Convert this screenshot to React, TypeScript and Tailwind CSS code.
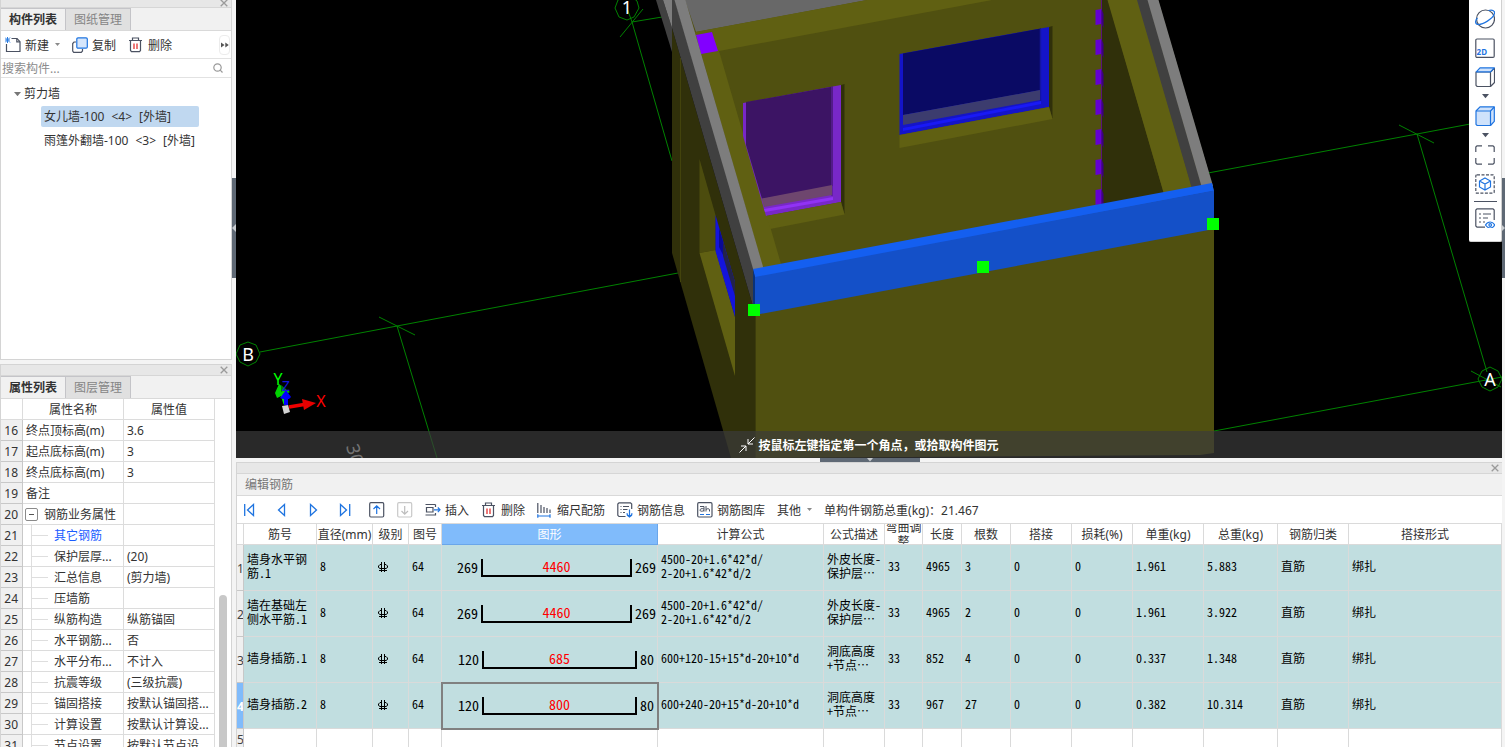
import type { ReactNode } from "react";

const UI_FONT = "font-['Noto_Sans','Noto_Sans_CJK_SC',sans-serif]";
const MONO_FONT = "font-['Noto_Sans_Mono_CJK_SC','Noto_Sans_CJK_SC',monospace]";

type IconProps = { className?: string };

function Glyph({ children, className = "size-4" }: { children: ReactNode; className?: string }) {
  return (
    <svg viewBox="0 0 16 16" fill="none" stroke="#4b5262" strokeWidth="1.2" className={`shrink-0 ${className}`} aria-hidden="true">
      {children}
    </svg>
  );
}

function Caret({ className = "w-[5px]" }: IconProps) {
  return (
    <svg viewBox="0 0 6 4" className={`shrink-0 ${className}`} aria-hidden="true">
      <path d="M0 0h6L3 3.6z" fill="currentColor" />
    </svg>
  );
}

function NewIcon() {
  return (
    <Glyph>
      <path d="M6.5 1.5H12l3 3.2V14.5H1.5V7" />
      <path d="M11.8 1.5v3.4H15" />
      <path d="M0 .5l5 5M5 .5l-5 5M2.5 0v6M0 3h5" stroke="#2a7de1" strokeWidth="1" />
    </Glyph>
  );
}

function CopyIcon() {
  return (
    <Glyph>
      <path d="M4 5H2L.7 6.500V14l1 1.300h7.600l1.200-1.300V12" />
      <rect x="4.800" y=".8" width="10.500" height="10.400" rx="1.200" fill="#d6e6fb" stroke="#1f74e0" />
    </Glyph>
  );
}

function TrashIcon() {
  return (
    <Glyph>
      <path d="M1 3.500h13M4.500 3.500V1h6v2.500M2.500 3.500V13.500l1 1.200h8l1-1.200V3.500" />
      <path d="M6 6.500v5.500M9 6.500v5.500" stroke="#e03030" strokeWidth="1.300" />
    </Glyph>
  );
}

function InsertIcon() {
  return (
    <Glyph>
      <path d="M.5 2.500h10M10.500 2.500v2.500M.5 13h10V11M1.500 5.500h6.500v4.500H1.500z" />
      <path d="M9 7.800h6M12.800 5.500L15 7.800l-2.200 2.300" stroke="#1f74e0" />
    </Glyph>
  );
}

function ScaleIcon() {
  return (
    <Glyph>
      <path d="M.8 1v10M4 3v8M7 5v6M10 6v5M13 7.500V11" />
      <path d="M.8 14h12.200M.8 12.300v3.400M13 12.300v3.400" stroke="#1f74e0" />
    </Glyph>
  );
}

function InfoIcon() {
  return (
    <Glyph>
      <path d="M8.500 14.500H2L.8 13.300V2L2 .8h11.500l1.200 1.200V7" />
      <path d="M3.500 4.500h1M6 4.500h6M3.500 7.500h1M6 7.500h4.500M3.500 10.500h1M6 10.500h2" />
      <path d="M12.500 7.500v7M10.200 11.200c-1 3.500 5.600 3.500 4.600 0M10 13l2.500 2 2.500-2" stroke="#1f74e0" />
    </Glyph>
  );
}

function LibraryIcon() {
  return (
    <Glyph>
      <rect x=".7" y=".7" width="14.300" height="14.300" rx="1.200" />
      <path d="M3 4.500h4v5M7 7C4.500 6 3 7 3 8.200s2 1.500 4 .3M9 4v5.500M9 7.500c1.500-1.300 3.500-1 3.500.5v1.500" strokeWidth="1" />
      <path d="M3 12.500h4M9 12.500h4" stroke="#1f74e0" />
    </Glyph>
  );
}

function CloseIcon({ className = "" }: IconProps) {
  return (
    <svg viewBox="0 0 8 8" className={`size-2 ${className}`} stroke="#9a9a9a" strokeWidth="1.300" aria-hidden="true">
      <path d="M.7.7l6.600 6.600M7.300.7L.7 7.300" />
    </svg>
  );
}

function PanelStrip({ className }: { className: string }) {
  return (
    <div className={`flex shrink-0 items-center justify-end border-b border-[#d6d6d6] bg-[#e7e7e7] pr-[3px] ${className}`}>
      <button type="button" aria-label="关闭">
        <CloseIcon />
      </button>
    </div>
  );
}

function PanelTabs({ active, other }: { active: string; other: string }) {
  return (
    <div className="flex h-[23px] shrink-0 border-b border-[#d9d9d9] bg-[#f1f1f1]" role="tablist">
      <button type="button" role="tab" aria-selected="true" className="w-16 border-t border-[#c4c4c8] bg-[#f1f1f1] font-bold text-[#333]">
        {active}
      </button>
      <button type="button" role="tab" aria-selected="false" className="w-[66px] border-x border-t border-[#c4c4c8] bg-[#e0e0e0] text-[#858585]">
        {other}
      </button>
    </div>
  );
}

function ToolButton({ icon, label }: { icon: ReactNode; label: string }) {
  return (
    <button type="button" className="flex shrink-0 items-center gap-1 whitespace-nowrap">
      {icon}
      <span className="pt-[2px]">{label}</span>
    </button>
  );
}

function TreeLabel({ name, count }: { name: string; count: number }) {
  return (
    <>
      <span>{name}</span>
      <span>&lt;{count}&gt;</span>
      <span>[外墙]</span>
    </>
  );
}

function ComponentPanel() {
  return (
    <section className="flex min-h-0 flex-1 flex-col border-x border-b border-[#d4d4d4] bg-white">
      <PanelStrip className="h-2 items-end" />
      <PanelTabs active="构件列表" other="图纸管理" />
      <div className="flex h-7 shrink-0 items-center gap-3 border-b border-[#e2e2e2] pl-1">
        <button type="button" className="flex items-center gap-1">
          <NewIcon />
          <span className="pt-[2px]">新建</span>
          <Caret className="ml-[2px] w-[5px] text-[#8a8a8a]" />
        </button>
        <ToolButton icon={<CopyIcon />} label="复制" />
        <ToolButton icon={<TrashIcon />} label="删除" />
        <button type="button" aria-label="更多" className="mr-px ml-auto flex h-5 w-[11px] items-center justify-center rounded border border-[#ececec]">
          <svg viewBox="0 0 8 6" className="w-2 shrink-0" fill="#555" aria-hidden="true">
            <path d="M0 .5l3.500 2.500L0 5.500zM4.300.5L7.800 3 4.300 5.500z" />
          </svg>
        </button>
      </div>
      <label className="flex h-[19px] shrink-0 items-center border-b border-[#e2e2e2] pr-2 pl-px">
        <input type="text" placeholder="搜索构件..." aria-label="搜索构件" className="min-w-0 flex-1 pt-[2px] outline-none placeholder:text-[#8c8c8c]" />
        <svg viewBox="0 0 10 10" className="size-[10px]" fill="none" stroke="#9a9a9a" strokeWidth="1.200" aria-hidden="true">
          <circle cx="4.500" cy="4.500" r="3.700" />
          <path d="M7.200 7.200L9.500 9.500" />
        </svg>
      </label>
      <ul className="pt-1">
        <li>
          <div className="flex h-6 items-center gap-[3px] pl-[13px]">
            <Caret className="w-[7px] text-[#777]" />
            剪力墙
          </div>
          <ul className="pl-10">
            <li className="flex h-[21px] w-[158px] items-center gap-[7px] rounded-xs bg-[#c0d8f0] pl-[3px] whitespace-nowrap">
              <TreeLabel name="女儿墙-100" count={4} />
            </li>
            <li className="mt-[3px] flex h-[21px] items-center gap-[7px] pl-[3px] whitespace-nowrap">
              <TreeLabel name="雨篷外翻墙-100" count={3} />
            </li>
          </ul>
        </li>
      </ul>
    </section>
  );
}

type Property = { no: number; name: string; value: string; kind?: "group" | "child" | "link" };

const properties: Property[] = [
  { no: 16, name: "终点顶标高(m)", value: "3.6" },
  { no: 17, name: "起点底标高(m)", value: "3" },
  { no: 18, name: "终点底标高(m)", value: "3" },
  { no: 19, name: "备注", value: "" },
  { no: 20, name: "钢筋业务属性", value: "", kind: "group" },
  { no: 21, name: "其它钢筋", value: "", kind: "link" },
  { no: 22, name: "保护层厚...", value: "(20)", kind: "child" },
  { no: 23, name: "汇总信息", value: "(剪力墙)", kind: "child" },
  { no: 24, name: "压墙筋", value: "", kind: "child" },
  { no: 25, name: "纵筋构造", value: "纵筋锚固", kind: "child" },
  { no: 26, name: "水平钢筋...", value: "否", kind: "child" },
  { no: 27, name: "水平分布...", value: "不计入", kind: "child" },
  { no: 28, name: "抗震等级", value: "(三级抗震)", kind: "child" },
  { no: 29, name: "锚固搭接", value: "按默认锚固搭...", kind: "child" },
  { no: 30, name: "计算设置", value: "按默认计算设...", kind: "child" },
  { no: 31, name: "节点设置", value: "按默认节点设...", kind: "child" },
];

function PropertyName({ item }: { item: Property }) {
  if (item.kind === "group") {
    return (
      <div className="flex h-5 items-center gap-[6px] pl-[2px]">
        <button type="button" aria-label="折叠" className="flex size-[13px] items-center justify-center rounded-xs border border-[#8a8a8a]">
          <span className="h-px w-[5px] bg-[#555]" />
        </button>
        <span className="pt-[2px]">{item.name}</span>
      </div>
    );
  }
  if (item.kind) {
    return (
      <div className="ml-2 flex h-5 items-center gap-[6px] border-l border-[#dedede]">
        <span className="h-px w-4 bg-[#dedede]" />
        <span className={`pt-[2px] ${item.kind === "link" ? "text-[#1a5cff]" : ""}`}>{item.name}</span>
      </div>
    );
  }
  return <div className="flex h-5 items-center pt-[2px] pl-[3px]">{item.name}</div>;
}

function PropertyPanel() {
  return (
    <section className="flex h-[383px] shrink-0 flex-col overflow-hidden border-x border-t border-[#d4d4d4] bg-white">
      <PanelStrip className="h-[11px]" />
      <PanelTabs active="属性列表" other="图层管理" />
      <div className="flex min-h-0 flex-1 overflow-hidden">
        <table className="h-fit w-full flex-1 table-fixed border-separate border-spacing-0">
          <colgroup>
            <col className="w-[22px]" />
            <col className="w-[101px]" />
            <col />
          </colgroup>
          <thead>
            <tr className="h-[21px]">
              <th className="border-r border-b border-[#dcdcdc] p-0" />
              <th className="border-r border-b border-[#dcdcdc] p-0 pt-[2px] font-normal">属性名称</th>
              <th className="border-r border-b border-[#dcdcdc] p-0 pt-[2px] font-normal">属性值</th>
            </tr>
          </thead>
          <tbody>
            {properties.map((item) => (
              <tr key={item.no} className="h-[21px] whitespace-nowrap">
                <td className="border-r border-b border-[#c8c8c8] bg-[#f0f0f0] p-0 pt-[2px] pr-1 text-right">{item.no}</td>
                <td className="border-r border-b border-[#dcdcdc] p-0">
                  <PropertyName item={item} />
                </td>
                <td className="overflow-hidden border-r border-b border-[#dcdcdc] p-0 pt-[2px] pl-[3px]">{item.value}</td>
              </tr>
            ))}
          </tbody>
        </table>
        <div className="flex w-4 shrink-0 justify-center pt-[196px]">
          <div className="w-2 rounded-t-full bg-[#c8c8c8]" />
        </div>
      </div>
    </section>
  );
}

function SplitterHandle() {
  return (
    <div className="flex w-1 shrink-0 flex-col items-center bg-[#f4f4f4] pt-[178px]">
      <div className="flex h-[100px] w-full items-center justify-center bg-[#5f6975]">
        <svg viewBox="0 0 4 8" className="w-1" fill="#c8ccd0" aria-hidden="true">
          <path d="M4 0v8L0 4z" />
        </svg>
      </div>
    </div>
  );
}

const columnMarks = [9, 39, 69, 99, 129, 159, 189];

function Scene() {
  return (
    <svg viewBox="236 0 1266 458" preserveAspectRatio="xMidYMid slice" className="block size-full" role="img" aria-label="三维模型">
      <rect x="236" width="1266" height="458" fill="#000" />
      <g stroke="#008200" strokeWidth="1" fill="none">
        <path d="M260 352L397 326 678 273M379 317l36 18M397 326L437 458" />
        <path d="M632 22l40 139M632 22l30-5M620 37l23-28M632 22l-5-14" />
        <path d="M1208 173L1417 134 1502 118M1399 125l35 18M1417 134L1487 372" />
        <path d="M1214 431L1502 377M1471 371l30 16" />
        <path d="M248 342l8 3 4 9-4 8-8 4-8-4-4-8 4-9z" />
        <path d="M624-4h7l6 5 2 7-5 9-7 3-8-3-4-9 3-8z" />
        <path d="M1490 367l8 4 4 8-4 8-8 4-8-4-4-8 4-8z" />
      </g>
      <g fill="#fff" fontFamily="Noto Sans, sans-serif" fontSize="18" textAnchor="middle">
        <text x="627" y="14">1</text>
        <text x="248" y="361">B</text>
        <text x="1490" y="386">A</text>
      </g>

      <path d="M672 28L755 313V458H731L672 253z" fill="#30300a" />
      <path d="M680.500 58V282" stroke="#43430c" fill="none" />
      <path d="M699.500 159L735 288V376L699.500 253z" fill="#30300a" />
      <path d="M699.500 159L715.500 215V250L699.500 253z" fill="#4c4c0e" />
      <path d="M699.500 253L715.500 250 735 317V376z" fill="#606012" />
      <path d="M715.500 215L735 282V317L715.500 251z" fill="#1414dc" />
      <path d="M719 228l4 13v14l-4-8z" fill="#0a0a96" />
      <path d="M723 241L735 282V296L723 256z" fill="#23234b" />

      <path d="M755 314L1214 228V453L1200 455 755 458z" fill="#505010" />
      <path d="M755.500 314V458" stroke="#3c3c0c" />

      <path d="M685 0H1158L1214 191 760 280z" fill="#505010" />
      <path d="M685 0H867L696 32z" fill="#686868" />
      <path d="M695 32L867 0H992L719 51 781 264 763 268z" fill="#606012" />
      <path d="M696 35L712 32 718 51 701 54z" fill="#8200ff" />

      <path d="M743 103L841 85V202L766 216 743 136z" fill="#7828c8" />
      <path d="M746 102L833 86.500V186L762 199 746 145z" fill="#3c1464" />
      <path d="M832 87V196" stroke="#5a1e96" strokeWidth="1.500" />
      <path d="M761.500 198.500L832 185V195L764 207z" fill="#6e466e" />
      <path d="M764 209L833 197V200L765 212z" fill="#9132f5" />
      <path d="M841 85L844.500 84V214L841 202z" fill="#30300a" />
      <path d="M766 216L841 202 844.500 214.500 770 229z" fill="#606012" />

      <path d="M899.500 54L1049 27V107L899.500 135z" fill="#1414c8" />
      <path d="M903 53.500L1041 28.500V90L903 115z" fill="#0a0a64" />
      <path d="M1040.500 29V101" stroke="#1414a0" strokeWidth="1.500" />
      <path d="M903 115L1040 90V100L903 125z" fill="#3c3c6e" />
      <path d="M903 128L1041 101V104L903 131z" fill="#1919f5" />
      <path d="M1049 27L1052.500 26V119L1049 107z" fill="#30300a" />
      <path d="M899.500 135L1049 107 1052.500 119 899.500 148z" fill="#606012" />

      <path d="M1102 0H1108L1164 194 1102 205z" fill="#30300a" />
      <path d="M1101.500 0V205" stroke="#5a1478" />
      {columnMarks.map((y) => (
        <g key={y}>
          <path d={`M1095.500 ${y + 1}l6-1v15l-6 1z`} fill="#6400d2" />
          <path d={`M1101.500 ${y}l2 5v14l-2-4z`} fill="#3c0082" />
        </g>
      ))}
      <path d="M1107.500 0H1138L1192 188 1164 194z" fill="#606012" />
      <path d="M1137 0H1148L1202 187 1192 189z" fill="#404040" />
      <path d="M1147.500 0H1158.500L1213 186 1202 188z" fill="#7d7d7d" />

      <path d="M656 0H663L672 28V52z" fill="#404040" />
      <path d="M663 0H673L672 28z" fill="#7d7d7d" />
      <path d="M672 0H675L755 272V313L672 28z" fill="#404040" />
      <path d="M674.500 0H685.500L764 270 754 272z" fill="#7d7d7d" />

      <path d="M753 269L1212 183 1214 191 755 278z" fill="#145ff0" />
      <path d="M755 277L1214 190.500V229L755 315z" fill="#1450c8" />
      <path d="M753 269L755 277V315L753 308z" fill="#0a3278" />
      <g fill="#00ff00">
        <rect x="748" y="304" width="12" height="12" />
        <rect x="977" y="261" width="12" height="12" />
        <rect x="1207" y="218" width="12" height="12" />
      </g>

      <path d="M285 404L280 388" stroke="#00e600" strokeWidth="3" />
      <path d="M279 384l6 5 5 3-13 6-2-5z" fill="#00d200" />
      <path d="M281 385l5 4-5 3z" fill="#007800" />
      <path d="M286 405V396" stroke="#0000ff" strokeWidth="4" />
      <path d="M286 390l5 7-2 2h-6l-3-1z" fill="#0000ff" />
      <path d="M289 407l18-3" stroke="#f00000" strokeWidth="3.500" />
      <path d="M302 399l14 4-12 7z" fill="#e60000" />
      <path d="M282 406l6-1 2 7-6 2z" fill="#d2d2d2" />
      <g fontFamily="Noto Sans, sans-serif" fontSize="16" textAnchor="middle">
        <text x="278" y="385" fill="#00ff00">Y</text>
        <text x="286" y="391" fill="#1414dc" fontSize="14">Z</text>
        <text x="321" y="407" fill="#ff0000">X</text>
      </g>
      <text transform="translate(346 446) rotate(75)" fill="#fff" fontFamily="Noto Sans, sans-serif" fontSize="18">
        3000
      </text>
    </svg>
  );
}

function ViewIcon({ label, children, className = "mb-[9px]" }: { label: string; children: ReactNode; className?: string }) {
  return (
    <button type="button" aria-label={label} className={`block size-5 ${className}`}>
      <svg viewBox="0 0 20 20" fill="none" stroke="#4b5262" strokeWidth="1.200" className="size-5" aria-hidden="true">
        {children}
      </svg>
    </button>
  );
}

function ViewToolbar() {
  return (
    <div className="absolute top-0 right-0 flex h-[242px] w-[33px] flex-col items-center rounded-b-xs border-r border-b border-[#d0d0d0] bg-white pt-[9px] text-[#4b5262]">
      <ViewIcon label="动态观察">
        <circle cx="10.500" cy="10" r="9" />
        <path d="M2.500 9C-.5 12 .2 15.500 3.500 15.500 8 15.500 17.500 10 19.300 5 20.500 2 17.500.3 13.500 1.500" stroke="#1f74e0" />
      </ViewIcon>
      <ViewIcon label="二维">
        <rect x=".8" y="1" width="18.400" height="18.400" rx="1.200" />
        <text x="10" y="16.500" textAnchor="end" dx="2" fill="#1f74e0" stroke="none" fontFamily="Noto Sans, sans-serif" fontSize="8" fontWeight="700">
          2D
        </text>
      </ViewIcon>
      <ViewIcon label="俯视" className="">
        <path d="M1 5h14.500v14.500H2.200L1 18.300zM15.500 5l4-3.500v14l-4 4" strokeLinejoin="round" />
        <path d="M1.300 4.800L5 .8h14.300l-3.800 4z" fill="#cfe2fb" stroke="#1f74e0" strokeLinejoin="round" />
      </ViewIcon>
      <span className="flex h-[19px] items-center">
        <Caret className="w-[7px]" />
      </span>
      <ViewIcon label="实体" className="">
        <path d="M1 5L5 .8h14.300v14.500l-3.800 4.200H2.200L1 18.300z" fill="#cfe2fb" stroke="#1f74e0" strokeLinejoin="round" />
        <path d="M1 5h14.500v14.500M15.500 5l3.800-4" stroke="#1f74e0" />
      </ViewIcon>
      <span className="flex h-[19px] items-center">
        <Caret className="w-[7px]" />
      </span>
      <ViewIcon label="全屏">
        <path d="M.8 7V2L2 .8h5M13 .8h5L19.200 2v5M19.200 13v5L18 19.200h-5M7 19.200H2L.8 18v-5" />
      </ViewIcon>
      <ViewIcon label="局部三维" className="">
        <rect x=".8" y=".8" width="18.400" height="18.400" rx="1.200" strokeDasharray="3 1.500" />
        <path d="M10 4l5.500 3v6L10 16l-5.500-3V7zM4.500 7L10 10l5.500-3M10 10v6" stroke="#1f74e0" />
      </ViewIcon>
      <div className="mt-[7px] mb-[6px] h-px w-[23px] bg-[#4b5262]" />
      <ViewIcon label="显示设置" className="">
        <path d="M10 19.200H2L.8 18V2L2 .8h16L19.200 2v10" />
        <path d="M4 6h2M8 6h8M4 10h2M8 10h5M4 14h2M8 14h2" />
        <path d="M10.500 17c2.500-4 7-4 9.300 0-2.300 4-6.800 4-9.300 0z" stroke="#1f74e0" fill="#fff" />
        <circle cx="15.200" cy="17" r="1.300" stroke="#1f74e0" />
      </ViewIcon>
    </div>
  );
}

function Viewport() {
  return (
    <div className="flex min-h-0 flex-1">
      <main className="relative min-w-0 flex-1 overflow-hidden bg-black">
        <div className="absolute inset-0">
          <Scene />
        </div>
        <div className="absolute inset-x-0 bottom-0 flex h-[27px] items-center justify-center gap-[3px] bg-[#3a3a3a]/70 font-bold text-white">
          <svg viewBox="0 0 16 16" className="size-4" fill="none" stroke="#fff" aria-hidden="true">
            <path d="M15.500.5L9 7M9 2v5h5M.5 15.500L7 9M2 9h5v5" />
          </svg>
          <span className="pt-[2px]">按鼠标左键指定第一个角点，或拾取构件图元</span>
        </div>
        <ViewToolbar />
      </main>
      <div className="w-[3px] shrink-0 bg-[#f4f4f4] pt-[178px]">
        <div className="flex h-[100px] items-center bg-[#5f6975]">
          <svg viewBox="0 0 4 8" className="w-[3px]" fill="#c8ccd0" aria-hidden="true">
            <path d="M0 0v8l4-4z" />
          </svg>
        </div>
      </div>
    </div>
  );
}

type Bar = {
  name: string;
  left: string;
  length: string;
  right: string;
  formula: string;
  note: string;
  total: string;
  count: string;
  unit: string;
  sum: string;
};

const bars: Bar[] = [
  { name: "墙身水平钢筋.1", left: "269", length: "4460", right: "269", formula: "4500-20+1.6*42*d/\n2-20+1.6*42*d/2", note: "外皮长度-保护层…", total: "4965", count: "3", unit: "1.961", sum: "5.883" },
  { name: "墙在基础左侧水平筋.1", left: "269", length: "4460", right: "269", formula: "4500-20+1.6*42*d/\n2-20+1.6*42*d/2", note: "外皮长度-保护层…", total: "4965", count: "2", unit: "1.961", sum: "3.922" },
  { name: "墙身插筋.1", left: "120", length: "685", right: "80", formula: "600+120-15+15*d-20+10*d", note: "洞底高度+节点…", total: "852", count: "4", unit: "0.337", sum: "1.348" },
  { name: "墙身插筋.2", left: "120", length: "800", right: "80", formula: "600+240-20+15*d-20+10*d", note: "洞底高度+节点…", total: "967", count: "27", unit: "0.382", sum: "10.314" },
];

const headers = ["筋号", "直径(mm)", "级别", "图号", "图形", "计算公式", "公式描述", "弯曲调整", "长度", "根数", "搭接", "损耗(%)", "单重(kg)", "总重(kg)", "钢筋归类", "搭接形式"];

function GradeMark() {
  return (
    <svg viewBox="0 0 10 11" className="mt-[3px] ml-[2px] h-[11px] w-[10px]" fill="none" stroke="#000" aria-label="HRB400">
      <path d="M3.500 0v10M6.500 0v10M1 8.500h8M3.500 2.500H2L.5 4v1.500L2 6.500h6l1.500-1V4L8 2.500H6.500" />
    </svg>
  );
}

function BarShape({ bar }: { bar: Bar }) {
  return (
    <div className={`flex items-center gap-[3px] text-[14px] leading-[14px] ${bar.right.length > 2 ? "pr-px pl-[15px]" : "pr-[3px] pl-4"}`}>
      <span className="pb-[2px]">{bar.left}</span>
      <span className="h-[18px] flex-1 border-x-2 border-b-2 border-black text-center text-[#f00]">{bar.length}</span>
      <span className="pb-[2px]">{bar.right}</span>
    </div>
  );
}

function Cell({ children, className = "" }: { children?: ReactNode; className?: string }) {
  return <td className={`border-r border-b border-[#dadada] p-0 px-[3px] pb-1 ${className}`}>{children}</td>;
}

function BarTable() {
  return (
    <table className="w-full table-fixed border-separate border-spacing-0">
      <colgroup>
        <col className="w-[7px]" />
        <col className="w-[73px]" />
        <col className="w-[56px]" />
        <col className="w-[36px]" />
        <col className="w-[33px]" />
        <col className="w-[216px]" />
        <col className="w-[166px]" />
        <col className="w-[61px]" />
        <col className="w-[38px]" />
        <col className="w-[39px]" />
        <col className="w-[49px]" />
        <col className="w-[61px]" />
        <col className="w-[61px]" />
        <col className="w-[71px]" />
        <col className="w-[74px]" />
        <col className="w-[71px]" />
        <col />
      </colgroup>
      <thead>
        <tr>
          <th className="border-r border-b border-[#dadada] p-0" />
          {headers.map((label) => (
            <th
              key={label}
              className={`border-r border-b p-0 font-normal ${label === "图形" ? "border-[#6aa6ea] bg-[#80bbfb] text-white" : "border-[#dadada]"}`}
            >
              <div className={`flex h-5 items-center justify-center overflow-hidden pt-[2px] leading-[14px] ${label === "弯曲调整" ? "" : "whitespace-nowrap"}`}>{label}</div>
            </th>
          ))}
        </tr>
      </thead>
      <tbody>
        {bars.map((bar, i) => (
          <tr key={bar.name} className={`h-[46px] bg-[#c1dee0] text-black leading-[14px] ${MONO_FONT}`}>
            <td className={`overflow-hidden border-r border-b border-[#c8c8c8] p-0 pt-[2px] ${UI_FONT} ${i === 3 ? "bg-[#80bbfb] font-bold text-white" : "bg-[#f0f0f0] text-[#444]"}`}>{i + 1}</td>
            <Cell>{bar.name}</Cell>
            <Cell>8</Cell>
            <Cell>
              <GradeMark />
            </Cell>
            <Cell>64</Cell>
            <td className={`border-r border-b border-[#dadada] p-0 ${i === 3 ? "outline-2 -outline-offset-1 outline-[#808080]" : ""}`}>
              <BarShape bar={bar} />
            </td>
            <Cell className="whitespace-pre-line">{bar.formula}</Cell>
            <Cell>{bar.note}</Cell>
            <Cell>33</Cell>
            <Cell>{bar.total}</Cell>
            <Cell>{bar.count}</Cell>
            <Cell>0</Cell>
            <Cell>0</Cell>
            <Cell>{bar.unit}</Cell>
            <Cell>{bar.sum}</Cell>
            <Cell>直筋</Cell>
            <Cell>绑扎</Cell>
          </tr>
        ))}
        <tr className="h-[22px]">
          <td className="overflow-hidden border-r border-b border-[#c8c8c8] bg-[#f0f0f0] p-0 leading-5 text-[#444]">5</td>
          {headers.map((label) => (
            <Cell key={label} />
          ))}
        </tr>
      </tbody>
    </table>
  );
}

function NavButton({ label, children }: { label: string; children: ReactNode }) {
  return (
    <button type="button" aria-label={label}>
      <svg viewBox="0 0 16 16" className="size-4" fill="none" stroke="#1f74e0" strokeWidth="1.300" aria-hidden="true">
        {children}
      </svg>
    </button>
  );
}

function RebarPanel() {
  return (
    <section className="mr-[3px] flex h-[285px] shrink-0 flex-col overflow-hidden border-t border-l border-[#d4d4d4] bg-white">
      <PanelStrip className="h-[11px]" />
      <h2 className="h-[22px] shrink-0 border-b border-[#d9d9d9] bg-[#f1f1f1] pl-2 leading-[22px] text-[#777]">编辑钢筋</h2>
      <div className="flex h-7 shrink-0 items-center gap-3 border-b border-[#dadada] pl-1">
        <div className="mr-1 flex gap-4">
          <NavButton label="第一个">
            <path d="M3.700 2v12M12.500 2.500v11L6.500 8z" />
          </NavButton>
          <NavButton label="上一个">
            <path d="M11.500 2.500v11L5.500 8z" />
          </NavButton>
          <NavButton label="下一个">
            <path d="M5.500 2.500v11L11.500 8z" />
          </NavButton>
          <NavButton label="最后一个">
            <path d="M12.700 2v12M3.500 2.500v11L9.500 8z" />
          </NavButton>
        </div>
        <button type="button" aria-label="上移">
          <Glyph>
            <rect x=".7" y=".7" width="14" height="14.300" rx="1.200" />
            <path d="M7.700 12V4M4.500 7L7.700 3.800 11 7" stroke="#1f74e0" />
          </Glyph>
        </button>
        <button type="button" aria-label="下移" disabled>
          <Glyph>
            <rect x=".7" y=".7" width="14" height="14.300" rx="1.200" stroke="#c8c8c8" />
            <path d="M7.700 4v8M4.500 9l3.200 3.200L11 9" stroke="#bdbdbd" />
          </Glyph>
        </button>
        <ToolButton icon={<InsertIcon />} label="插入" />
        <ToolButton icon={<TrashIcon />} label="删除" />
        <ToolButton icon={<ScaleIcon />} label="缩尺配筋" />
        <ToolButton icon={<InfoIcon />} label="钢筋信息" />
        <ToolButton icon={<LibraryIcon />} label="钢筋图库" />
        <button type="button" className="flex items-center gap-[6px] whitespace-nowrap">
          <span className="pt-[2px]">其他</span>
          <Caret className="w-[5px] text-[#8a8a8a]" />
        </button>
        <span className="pt-[2px] whitespace-nowrap">单构件钢筋总重(kg)：21.467</span>
      </div>
      <BarTable />
    </section>
  );
}

export default function App() {
  return (
    <div className={`flex h-screen overflow-hidden bg-[#f4f4f4] text-[12px] leading-4 text-[#333] ${UI_FONT}`}>
      <aside className="flex w-[232px] shrink-0 flex-col gap-1">
        <ComponentPanel />
        <PropertyPanel />
      </aside>
      <SplitterHandle />
      <div className="flex min-w-0 flex-1 flex-col">
        <Viewport />
        <div className="flex h-1 shrink-0 justify-center pr-px">
          <div className="flex w-[100px] items-start justify-center bg-[#5f6975]">
            <Caret className="w-[6px] text-[#c8ccd0]" />
          </div>
        </div>
        <RebarPanel />
      </div>
    </div>
  );
}
